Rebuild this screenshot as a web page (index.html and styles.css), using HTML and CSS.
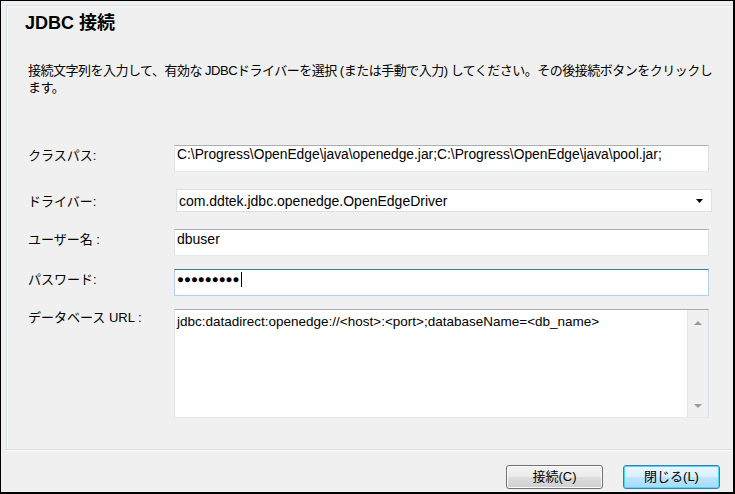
FILE: index.html
```html
<!DOCTYPE html>
<html lang="ja">
<head>
<meta charset="utf-8">
<title>JDBC 接続</title>
<link rel="stylesheet" href="styles.css">
</head>
<body>
<div class="window">
  <div class="panel">
    <h1 class="title">JDBC 接続</h1>
    <p class="desc">接続文字列を入力して、有効な JDBCドライバーを選択 (または手動で入力) してください。その後接続ボタンをクリックし<br>ます。</p>
    <div class="form">
      <div class="row row-first">
        <div class="lbl">クラスパス:</div>
        <div class="input input-path">C:\Progress\OpenEdge\java\openedge.jar;C:\Progress\OpenEdge\java\pool.jar;</div>
      </div>
      <div class="row row-gap-lg">
        <div class="lbl lbl-combo">ドライバー:</div>
        <div class="combo">
          <span class="combo-text">com.ddtek.jdbc.openedge.OpenEdgeDriver</span>
          <svg class="combo-arrow" width="7" height="4" viewBox="0 0 7 4"><path d="M0 0H7L3.5 4Z" fill="#000"/></svg>
        </div>
      </div>
      <div class="row row-gap-lg">
        <div class="lbl">ユーザー名 :</div>
        <div class="input">dbuser</div>
      </div>
      <div class="row row-gap-sm">
        <div class="lbl">パスワード:</div>
        <div class="input input-focus"><span class="mask">●●●●●●●●●</span><span class="caret"></span></div>
      </div>
      <div class="row row-gap-sm">
        <div class="lbl lbl-url">データベース URL :</div>
        <div class="textarea">
          <div class="ta-text">jdbc:datadirect:openedge://&lt;host&gt;:&lt;port&gt;;databaseName=&lt;db_name&gt;</div>
          <div class="scroll">
            <svg width="8" height="4" viewBox="0 0 8 4"><path d="M0 4L4 0L8 4Z" fill="#9a9a9a"/></svg>
            <svg width="8" height="4" viewBox="0 0 8 4"><path d="M0 0H8L4 4Z" fill="#9a9a9a"/></svg>
          </div>
        </div>
      </div>
    </div>
  </div>
  <div class="buttons">
    <button class="btn">接続(C)</button>
    <button class="btn btn-default">閉じる(L)</button>
  </div>
</div>
</body>
</html>
```
FILE: styles.css
```css
* { box-sizing: border-box; }
html, body { margin: 0; padding: 0; }
body {
  width: 735px;
  height: 494px;
  overflow: hidden;
  background: #f0f0f0;
  font-family: "Liberation Sans", "Noto Sans CJK JP", sans-serif;
  color: #000;
}
.window {
  width: 735px;
  height: 494px;
  border-style: solid;
  border-color: #000;
  border-width: 1px 2px 2px 1px;
  background: #f0f0f0;
  display: flex;
  flex-direction: column;
}
.panel {
  margin: 4px 0 0 5px;
  height: 445px;
  border-top: 1px solid #d5dfe5;
  border-left: 1px solid #d5dfe5;
  border-bottom: 1px solid #d5dfe5;
  box-shadow: inset 1px 1px 0 #fbfbfb, 0 1px 0 #fbfbfb;
  padding: 6px 0 0 0;
}
.title {
  margin: 0 0 0 18px;
  font-size: 18px;
  line-height: 22px;
  font-weight: bold;
}
.desc {
  margin: 28px 0 0 21px;
  font-size: 13px;
  line-height: 17px;
  letter-spacing: -0.5px;
  white-space: nowrap;
}
.form {
  margin: 0 0 0 21px;
}
.row {
  display: flex;
  align-items: flex-start;
}
.row-first { margin-top: 49px; }
.row-gap-lg { margin-top: 17px; }
.row-gap-sm { margin-top: 13px; }
.lbl {
  width: 146px;
  flex: none;
  font-size: 13px;
  line-height: 17px;
  padding-top: 2px;
}
.lbl-combo { padding-top: 4px; }
.lbl-url { padding-top: 0; }
.input {
  width: 535px;
  height: 27px;
  background: #fff;
  border: 1px solid;
  border-color: #abadb3 #dbdfe6 #e3e9ef #e2e3ea;
  padding: 1px 2px 0;
  font-size: 14px;
  line-height: 16px;
  white-space: nowrap;
  overflow: hidden;
}
.input-path { font-size: 13.8px; }
.input-focus {
  border-color: #3d7bad #b5cfe7 #b5cfe7 #b5cfe7;
}
.mask {
  font-size: 11.5px;
  line-height: 16px;
  letter-spacing: 0;
  vertical-align: 1px;
}
.caret {
  display: inline-block;
  width: 1px;
  height: 15px;
  background: #000;
  margin-left: 1px;
  vertical-align: -3px;
}
.combo {
  width: 536px;
  height: 23px;
  margin-left: 2px;
  background: #fff;
  border: 1px solid #dcdfe3;
  padding: 3px 8px 0 2px;
  display: flex;
  justify-content: space-between;
  align-items: flex-start;
  font-size: 14px;
  line-height: 16px;
  white-space: nowrap;
}
.combo-arrow { margin-top: 6px; flex: none; }
.textarea {
  width: 535px;
  height: 109px;
  background: #fff;
  border: 1px solid;
  border-color: #abadb3 #dbdfe6 #e3e9ef #e2e3ea;
  display: flex;
}
.ta-text {
  flex: 1;
  padding: 4px 2px;
  font-size: 13.5px;
  line-height: 16px;
  white-space: nowrap;
}
.scroll {
  width: 21px;
  flex: none;
  background: #f0f0f0;
  border-left: 1px solid #e6e6e6;
  display: flex;
  flex-direction: column;
  justify-content: space-between;
  align-items: center;
  padding: 11px 0 9px;
}
.buttons {
  display: flex;
  justify-content: flex-end;
  gap: 20px;
  padding: 15px 13px 0 0;
}
.btn {
  width: 97px;
  height: 24px;
  margin: 0;
  padding: 0;
  font-family: "Liberation Sans", "Noto Sans CJK JP", sans-serif;
  font-size: 13px;
  line-height: 20px;
  color: #000;
  border: 1px solid #707070;
  border-radius: 3px;
  background: linear-gradient(#f2f2f2 0%, #ebebeb 50%, #dddddd 50%, #cfcfcf 100%);
  box-shadow: inset 0 0 0 1px #fcfcfc;
}
.btn-default {
  border-color: #3c7fb1;
  background: linear-gradient(#eaf6fd 0%, #d9f0fc 50%, #bee6fd 50%, #a7d9f5 100%);
  box-shadow: inset 0 0 0 1px #48d8fb;
}
```
